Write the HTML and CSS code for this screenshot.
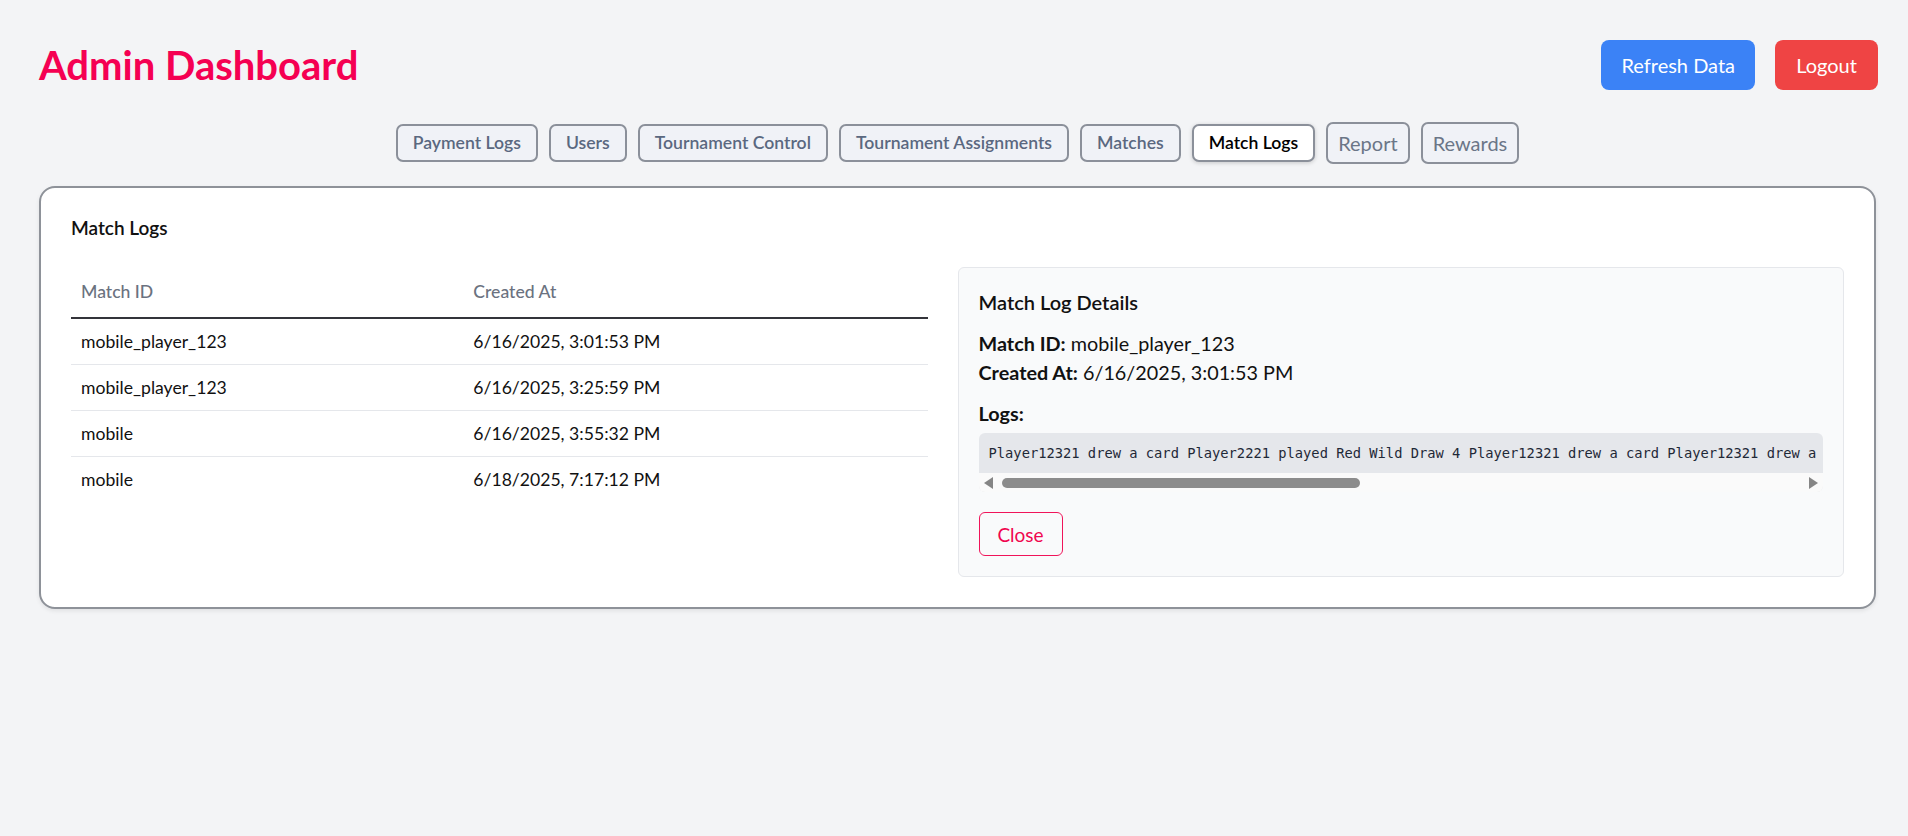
FILE: index.html
```html
<!DOCTYPE html>
<html lang="en">
<head>
<meta charset="utf-8">
<title>Admin Dashboard</title>
<link rel="stylesheet" href="styles.css">
</head>
<body>
<div class="page">
  <header class="topbar">
    <h1 class="title">Admin Dashboard</h1>
    <div class="actions">
      <button class="btn btn-blue">Refresh Data</button>
      <button class="btn btn-red">Logout</button>
    </div>
  </header>

  <nav class="tabs">
    <button class="tab">Payment Logs</button>
    <button class="tab">Users</button>
    <button class="tab">Tournament Control</button>
    <button class="tab">Tournament Assignments</button>
    <button class="tab">Matches</button>
    <button class="tab tab-active">Match Logs</button>
    <button class="tab tab-plain">Report</button>
    <button class="tab tab-plain">Rewards</button>
  </nav>

  <section class="card">
    <h2 class="card-title">Match Logs</h2>
    <div class="split">
      <table class="logs-table">
        <thead>
          <tr><th class="col-id">Match ID</th><th>Created At</th></tr>
        </thead>
        <tbody>
          <tr><td>mobile_player_123</td><td>6/16/2025, 3:01:53 PM</td></tr>
          <tr><td>mobile_player_123</td><td>6/16/2025, 3:25:59 PM</td></tr>
          <tr><td>mobile</td><td>6/16/2025, 3:55:32 PM</td></tr>
          <tr><td>mobile</td><td>6/18/2025, 7:17:12 PM</td></tr>
        </tbody>
      </table>

      <div class="details">
        <h3 class="details-title">Match Log Details</h3>
        <div class="info">
          <p class="info-line"><strong>Match ID:</strong> mobile_player_123</p>
          <p class="info-line"><strong>Created At:</strong> 6/16/2025, 3:01:53 PM</p>
        </div>
        <h4 class="logs-label">Logs:</h4>
        <div class="log-box">
          <pre class="log-text">Player12321 drew a card Player2221 played Red Wild Draw 4 Player12321 drew a card Player12321 drew a card Player2221 played Blue 7 Player12321 played Blue 3</pre>
          <div class="scrollbar">
            <span class="arrow arrow-left"></span>
            <div class="track"><div class="thumb"></div></div>
            <span class="arrow arrow-right"></span>
          </div>
        </div>
        <button class="btn-close">Close</button>
      </div>
    </div>
  </section>
</div>
</body>
</html>
```

FILE: styles.css
```css
* { box-sizing: border-box; }

html, body {
  margin: 0;
  padding: 0;
  background: #f3f4f6;
  font-family: Lato, "Open Sans", "Noto Sans", sans-serif;
  color: #111827;
}

.page {
  padding: 40px 32px 40px 39px;
}

.topbar {
  display: flex;
  align-items: center;
  justify-content: space-between;
  height: 50px;
}

.title {
  margin: 0;
  font-size: 40px;
  line-height: 48px;
  font-weight: 700;
  color: #f50052;
}

.actions {
  display: flex;
  gap: 20px;
  margin-right: -2px;
}

.btn {
  font-family: inherit;
  font-size: 20px;
  line-height: 30px;
  height: 50px;
  padding: 10px 20px;
  border: none;
  border-radius: 8px;
  color: #fff;
  white-space: nowrap;
  cursor: pointer;
}

.btn-blue { background: #3b82f6; min-width: 152px; }
.btn-red { background: #ef4444; min-width: 103px; }

.tabs {
  display: flex;
  justify-content: center;
  align-items: center;
  gap: 11px;
  height: 42px;
  margin-top: 32px;
}

.tab {
  font-family: inherit;
  font-size: 17.6px;
  font-weight: 600;
  line-height: 24px;
  padding: 5px 15px;
  color: #5a6880;
  background: #f0f2f7;
  border: 2px solid #8b909a;
  border-radius: 7px;
  white-space: nowrap;
}

.tab-active {
  background: #fff;
  color: #000;
  box-shadow: 0 1px 4px rgba(0, 0, 0, 0.18);
}

.tab-plain {
  font-weight: 400;
  font-size: 20px;
  line-height: 28px;
  padding: 5px 10px;
  color: #6b7687;
}

.card {
  margin-top: 22px;
  background: #fff;
  border: 2px solid #8e9299;
  border-radius: 16px;
  box-shadow: 0 2px 4px rgba(0, 0, 0, 0.08);
  padding: 26px 30px 30px 30px;
}

.card-title {
  margin: 0 0 25px 0;
  font-size: 19px;
  line-height: 28px;
  font-weight: 600;
  color: #111;
}

.split {
  display: grid;
  grid-template-columns: minmax(0, 858fr) minmax(0, 888fr);
  column-gap: 30px;
  align-items: start;
}

.logs-table {
  width: 100%;
  border-collapse: collapse;
  font-size: 17.6px;
}

.logs-table th {
  text-align: left;
  font-weight: 500;
  color: #6b7280;
  padding: 12px 10px;
  line-height: 26px;
  border-bottom: 2px solid #33343a;
}

.col-id { width: 45.8%; }

.logs-table td {
  padding: 10px 10px;
  line-height: 25px;
  color: #111;
  border-bottom: 1px solid #e5e7eb;
  white-space: nowrap;
}

.logs-table tbody tr:last-child td { border-bottom: none; }

.details {
  min-width: 0;
  background: #f9fafb;
  border: 1px solid #e5e7eb;
  border-radius: 6px;
  padding: 20px;
}

.details-title {
  margin: 0 0 13px 0;
  font-size: 20px;
  line-height: 28px;
  font-weight: 600;
  color: #111;
}

.info-line {
  margin: 0;
  font-size: 19.8px;
  line-height: 29px;
  color: #111;
}

.info-line strong { font-weight: 700; }

.logs-label {
  margin: 12px 0 6px 0;
  font-size: 19.8px;
  line-height: 28px;
  font-weight: 700;
  color: #111;
}

.log-box {
  background: #e5e7eb;
  border-radius: 6px;
  overflow: hidden;
}

.log-text {
  margin: 0;
  padding: 10px 0 10px 10px;
  font-family: "DejaVu Sans Mono", "Liberation Mono", monospace;
  font-size: 13.75px;
  line-height: 20px;
  color: #1f2937;
  white-space: pre;
  overflow: hidden;
}

.scrollbar {
  display: flex;
  align-items: center;
  height: 19px;
  background: #fafafa;
  padding: 0 5px;
}

.arrow {
  width: 0;
  height: 0;
  border-top: 6px solid transparent;
  border-bottom: 6px solid transparent;
}

.arrow-left { border-right: 9px solid #858585; }
.arrow-right { border-left: 9px solid #858585; }

.track {
  flex: 1;
  padding: 0 9px;
}

.thumb {
  width: 358px;
  height: 10px;
  border-radius: 5px;
  background: #8c8c8c;
}

.btn-close {
  margin-top: 20px;
  width: 84px;
  height: 44px;
  font-family: inherit;
  font-size: 19px;
  color: #f0064f;
  background: transparent;
  border: 1px solid #f0145a;
  border-radius: 6px;
}
```
